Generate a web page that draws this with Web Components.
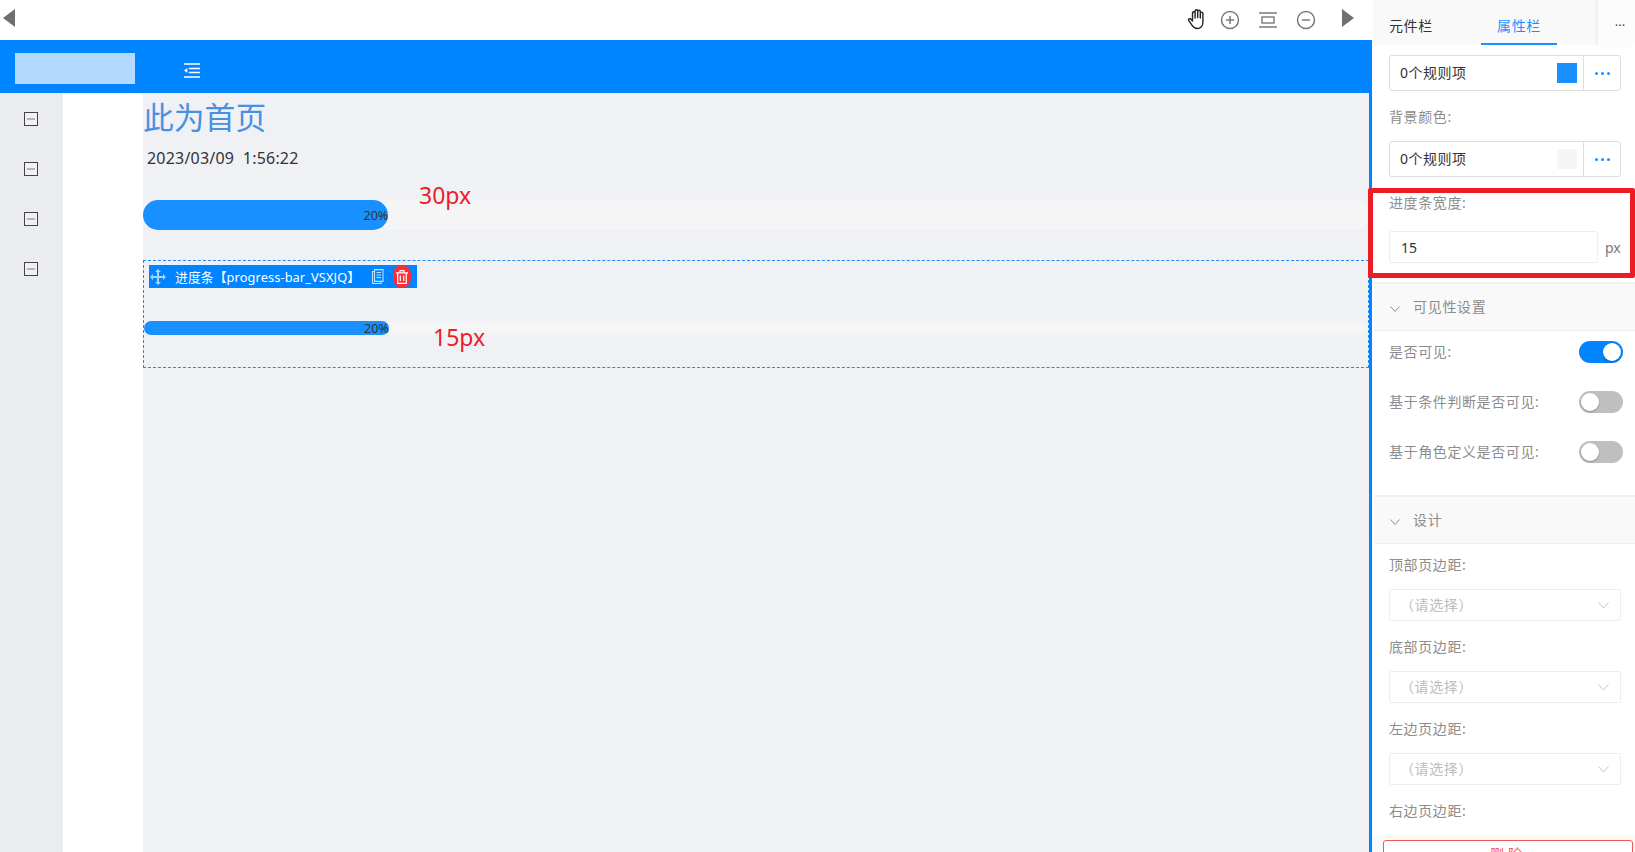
<!DOCTYPE html>
<html lang="zh">
<head>
<meta charset="utf-8">
<title>页面设计器</title>
<style>
  html, body { margin: 0; height: 100%; overflow: hidden; background: #fff; }
  body { font-family: "Noto Sans", "Noto Sans CJK SC", sans-serif; font-size: 14px; color: #333; }
</style>
</head>
<body>
<ds-designer>
  <ds-toolbar slot="toolbar"></ds-toolbar>
  <ds-header slot="header"></ds-header>
  <ds-rail slot="rail" count="4"></ds-rail>
  <ds-canvas slot="canvas">
    <ds-progress height="30" value="20" note="30px"></ds-progress>
    <ds-progress height="15" value="20" note="15px" selected name="进度条【progress-bar_VSXJQ】"></ds-progress>
  </ds-canvas>
  <ds-panel slot="panel">
    <ds-rule-field swatch="#1890ff" style="margin-top:10px"></ds-rule-field>
    <ds-label>背景颜色:</ds-label>
    <ds-rule-field swatch="#f5f5f5"></ds-rule-field>
    <ds-width-field label="进度条宽度:" value="15"></ds-width-field>
    <ds-section title="可见性设置">
      <ds-toggle on>是否可见:</ds-toggle>
      <ds-toggle>基于条件判断是否可见:</ds-toggle>
      <ds-toggle>基于角色定义是否可见:</ds-toggle>
    </ds-section>
    <ds-section title="设计" tight>
      <ds-label>顶部页边距:</ds-label>
      <ds-select></ds-select>
      <ds-label>底部页边距:</ds-label>
      <ds-select></ds-select>
      <ds-label>左边页边距:</ds-label>
      <ds-select></ds-select>
      <ds-label>右边页边距:</ds-label>
    </ds-section>
  </ds-panel>
</ds-designer>

<script>
(() => {
  "use strict";

  const FONT = `"Noto Sans", "Noto Sans CJK SC", sans-serif`;
  const BLUE = "#0084ff";

  // small helper, every element is just styles + markup in an open root
  const define = (tag, css, html, init) => {
    customElements.define(tag, class extends HTMLElement {
      constructor() {
        super();
        const root = this.attachShadow({ mode: "open" });
        root.innerHTML = `<style>${css}</style>${typeof html === "function" ? html(this) : html}`;
        if (init) init(this, root);
      }
    });
  };

  define("ds-designer", `
    :host{ display:grid; grid-template-columns:1372px 263px; position:relative; width:1635px; height:852px; overflow:hidden; font-family:${FONT}; }
    .main{ display:flex; flex-direction:column; min-width:0; height:852px; }
    .body{ flex:1; display:flex; min-height:0; border-right:3px solid ${BLUE}; }
    .white{ width:80px; background:#fff; flex:none; }
    /* red annotation drawn over the screenshot, sits across the panel edge */
    .hot{ position:absolute; left:1368px; top:188px; width:267px; height:90px; box-sizing:border-box; border:5px solid #ee1c25; border-radius:2px; pointer-events:none; }
  `, `
    <div class="main">
      <slot name="toolbar"></slot>
      <slot name="header"></slot>
      <div class="body">
        <slot name="rail"></slot>
        <div class="white"></div>
        <slot name="canvas"></slot>
      </div>
    </div>
    <slot name="panel"></slot>
    <div class="hot"></div>
  `);

  define("ds-toolbar", `
    :host{ display:flex; align-items:center; height:40px; background:#fff; padding:0 18px 0 3px; box-sizing:border-box; }
    svg{ display:block; flex:none; }
    .grow{ flex:1; }
    .tools{ display:flex; align-items:center; }
  `, `
    <svg width="12" height="18" viewBox="0 0 12 18" style="margin-top:-4px"><path d="M12 0v18L0 9z" fill="#6f6f6f"/></svg>
    <div class="grow"></div>
    <div class="tools">
      <svg width="20" height="22" viewBox="0 0 20 22" fill="none" stroke="#222" stroke-width="1.4" stroke-linecap="round" stroke-linejoin="round" style="margin-top:-2px">
        <path d="M5.5 12.5V5a1.3 1.3 0 0 1 2.6 0v5M8.1 9.5V3a1.3 1.3 0 0 1 2.6 0v6.5M10.7 9.5V3.6a1.3 1.3 0 0 1 2.6 0v6M13.3 10V5.4a1.3 1.3 0 0 1 2.6 0V14c0 4-2.4 6.5-5.7 6.5-3 0-4.4-1.6-5.6-3.8L1.7 12.4c-.7-1.3 1-2.4 2-1.4l1.8 2"/>
      </svg>
      <svg width="20" height="20" viewBox="0 0 20 20" fill="none" stroke="#7a7a7a" stroke-width="1.5" style="margin-left:13px"><circle cx="10" cy="10" r="8.5"/><path d="M10 6v8M6 10h8"/></svg>
      <svg width="20" height="16" viewBox="0 0 20 16" fill="none" stroke="#7a7a7a" stroke-width="1.4" style="margin-left:18px"><path d="M1 1h18M1 15h18"/><rect x="4" y="5" width="12" height="6"/></svg>
      <svg width="20" height="20" viewBox="0 0 20 20" fill="none" stroke="#7a7a7a" stroke-width="1.5" style="margin-left:18px"><circle cx="10" cy="10" r="8.5"/><path d="M6 10h8"/></svg>
      <svg width="12" height="18" viewBox="0 0 12 18" style="margin-left:26px;margin-top:-4px"><path d="M0 0v18l12-9z" fill="#707070"/></svg>
    </div>
  `);

  define("ds-header", `
    :host{ display:flex; align-items:center; height:53px; background:${BLUE}; padding:4px 0 0 15px; box-sizing:border-box; flex:none; }
    .logo{ width:120px; height:31px; background:#b3d9ff; }
    svg{ display:block; margin:4px 0 0 49px; }
  `, `
    <div class="logo"></div>
    <svg width="16" height="15" viewBox="0 0 16 15" fill="none" stroke="#fff" stroke-width="1.3">
      <path d="M0 1h16M5 5.5h11M5 9.5h11M0 14h16"/><path d="M3.4 5v5L0 7.5z" fill="#fff" stroke="none"/>
    </svg>
  `);

  define("ds-rail", `
    :host{ display:flex; flex-direction:column; align-items:center; gap:36px; width:63px; padding:19px 1px 0 0; background:#ebecf0; box-sizing:border-box; flex:none; }
    i{ display:flex; align-items:center; justify-content:center; width:14px; height:14px; box-sizing:border-box; border:1px solid #444; background:#f0f1f4; }
    i::after{ content:""; width:8px; height:2px; background:#b5b5b5; }
  `, el => "<i></i>".repeat(+el.getAttribute("count")));

  define("ds-canvas", `
    :host{ display:block; flex:1; min-width:0; background:#f0f1f5; }
    h1{ margin:0; padding-top:5px; font:400 30.8px/38px ${FONT}; color:#4a90e2; height:38px; }
    .date{ margin:0; padding:11px 0 0 4px; font:400 16px/22px ${FONT}; color:#333; height:22px; white-space:pre; letter-spacing:.2px; }
    .list{ padding-top:31px; display:flex; flex-direction:column; gap:30px; }
  `, `
    <h1>此为首页</h1>
    <p class="date">2023/03/09  1:56:22</p>
    <div class="list"><slot></slot></div>
  `);

  define("ds-progress", `
    :host{ display:block; position:relative; box-sizing:border-box; }
    :host([selected]){ border:1px dashed #1a8cff; height:108px; padding:4px 0 0 5px; }
    .bar{ display:flex; align-items:center; width:268px; height:23px; background:${BLUE}; color:#fff; font:400 12.8px/24px ${FONT}; white-space:nowrap; }
    .bar svg{ display:block; flex:none; }
    .name{ margin-left:9px; width:196px; letter-spacing:.1px; }
    .del{ display:flex; align-items:center; justify-content:center; flex:none; width:18px; height:23px; margin-left:8px; background:#fb2d37; border-radius:9px; }
    .rail{ height:var(--h); background:#f5f5f5; border-radius:calc(var(--h) / 2); }
    .fill{ box-sizing:border-box; height:100%; background:#1890ff; border-radius:inherit; font:400 12.5px/calc(var(--h) + 2px) ${FONT}; color:#333; text-align:right; overflow:visible; white-space:nowrap; }
    :host([selected]) .rail{ margin:33px 0 0 -5px; }
    .note{ position:absolute; color:#ee1c25; font:400 23px/32px ${FONT}; white-space:nowrap; }
  `, el => {
    const h = +el.getAttribute("height");
    const val = el.getAttribute("value");
    const name = el.getAttribute("name");
    const bar = name ? `
      <div class="bar">
        <svg width="16" height="16" viewBox="0 0 16 16" fill="#a6d4ff" style="margin-left:1px"><path d="M8 0l3 3H9v4h4V5l3 3-3 3V9H9v4h2l-3 3-3-3h2V9H3v2L0 8l3-3v2h4V3H5z"/></svg>
        <span class="name">${name}</span>
        <svg width="14" height="15" viewBox="0 0 14 15" fill="none" stroke="#bfe0ff" stroke-width="1.1"><path d="M3.5.6h8.5v11.8H3.5zM5.5 3.5h4.5M5.5 6h4.5M5.5 8.5h4.5"/><path d="M3.5 2.5H1.5v12h8.500v-2"/></svg>
        <span class="del"><svg width="12" height="14" viewBox="0 0 12 14" fill="none" stroke="#fff" stroke-width="1.2"><path d="M0 2.800h12M4 2.500V.7h4v1.800M1.700 3v10.300h8.600V3M4.300 5.500v5.500M7.700 5.500v5.500"/></svg></span>
      </div>` : "";
    const pos = name ? "left:289px;top:60px" : "left:276px;top:-21px";
    return `${bar}
      <div class="rail" style="--h:${h === 15 ? 14 : h}px"><div class="fill" style="width:${val}%">${val}%</div></div>
      <span class="note" style="${pos}">${el.getAttribute("note")}</span>`;
  });

  define("ds-panel", `
    :host{ display:flex; flex-direction:column; height:852px; position:relative; background:#fff; overflow:hidden; }
    .tabs{ display:flex; height:45px; flex:none; background:#f9f9f9; margin-left:1px; }
    .tab{ text-align:center; font-size:14px; letter-spacing:.6px; line-height:52px; color:#333; box-sizing:border-box; height:45px; }
    .tab.first{ width:108px; padding-left:16px; text-align:left; }
    .tab.on{ width:76px; color:#1890ff; border-bottom:2px solid #1890ff; }
    .more{ margin-left:auto; width:37px; padding-left:7px; box-sizing:border-box; background:#fcfcfc; color:#444; font-size:13px; line-height:50px; text-align:center; box-shadow:-2px 0 3px rgba(0,0,0,.05); }
    .scroll{ flex:1; min-height:0; overflow:hidden; }
    .foot{ flex:none; height:17px; background:#fafafa; padding:5px 2px 0 11px; box-sizing:border-box; }
    .del{ height:40px; border:1px solid #f25757; border-radius:3px; background:#fff; color:#f25757; font-size:14px; line-height:26px; text-align:center; letter-spacing:4px; }
  `, `
    <div class="tabs">
      <div class="tab first">元件栏</div>
      <div class="tab on">属性栏</div>
      <div class="more">···</div>
    </div>
    <div class="scroll"><slot></slot></div>
    <div class="foot"><div class="del">删除</div></div>
  `);

  define("ds-label", `
    :host{ display:block; padding-left:17px; color:#8c8c8c; font-size:14px; letter-spacing:.6px; line-height:52px; height:50px; }
  `, `<slot></slot>`);

  define("ds-rule-field", `
    :host{ display:flex; margin:0 14px 0 17px; height:36px; box-sizing:border-box; border:1px solid #ddd; border-radius:3px; background:#fff; }
    .val{ flex:1; display:flex; align-items:center; padding:0 6px 0 10px; font-size:14px; letter-spacing:.5px; color:#333; }
    .val span{ flex:1; padding-bottom:2px; }
    .val i{ width:20px; height:20px; background:var(--sw); }
    .dots{ width:36px; border-left:1px solid #ddd; display:flex; align-items:center; justify-content:center; gap:3px; }
    .dots b{ width:3px; height:3px; border-radius:50%; background:#1890ff; }
  `, el => `
    <div class="val" style="--sw:${el.getAttribute("swatch")}"><span>0个规则项</span><i></i></div>
    <div class="dots"><b></b><b></b><b></b></div>
  `);

  define("ds-width-field", `
    :host{ display:block; padding-left:17px; height:105px; box-sizing:border-box; }
    .lab{ color:#8c8c8c; line-height:52px; height:54px; font-size:14px; letter-spacing:.6px; }
    .row{ display:flex; align-items:center; }
    .inp{ width:209px; height:32px; box-sizing:border-box; border:1px solid #eee; border-radius:2px; padding-left:11px; font-size:14px; line-height:31px; color:#333; }
    .unit{ margin-left:7px; font-size:14px; color:#777; }
  `, el => `
    <div class="lab">${el.getAttribute("label")}</div>
    <div class="row"><div class="inp">${el.getAttribute("value")}</div><span class="unit">px</span></div>
  `);

  define("ds-section", `
    :host{ display:block; margin-left:2px; }
    .head{ display:flex; align-items:center; height:46px; background:#f9f9f9; border-top:2px solid #f0f0f0; border-bottom:1px solid #eee; color:#8c8c8c; font-size:14px; letter-spacing:.7px; box-sizing:content-box; }
    .head span{ margin-top:-2px; }
    .head svg{ margin:4px 13px 0 16px; display:block; }
    .body{ margin-left:-2px; padding:0 0 14px; }
    :host([tight]) .body{ padding-bottom:0; margin-top:-5px; }
  `, el => `
    <div class="head">
      <svg width="10" height="6" viewBox="0 0 10 6" fill="none" stroke="#8c8c8c" stroke-width="1"><path d="M.5.500L5 5.500 9.500.5"/></svg>
      <span>${el.getAttribute("title")}</span>
    </div>
    <div class="body"><slot></slot></div>
  `);

  define("ds-toggle", `
    :host{ display:flex; align-items:center; justify-content:space-between; height:50px; box-sizing:border-box; padding:0 12px 8px 17px; color:#8c8c8c; font-size:14px; letter-spacing:.6px; }
    span{ padding-bottom:2px; }
    .sw{ position:relative; width:44px; height:22px; border-radius:11px; background:#bfbfbf; flex:none; }
    .sw::after{ content:""; position:absolute; top:2px; left:2px; width:18px; height:18px; border-radius:50%; background:#fff; box-shadow:0 1px 2px rgba(0,0,0,.25); }
    :host([on]) .sw{ background:${BLUE}; }
    :host([on]) .sw::after{ left:24px; }
  `, `<span><slot></slot></span><div class="sw"></div>`);

  define("ds-select", `
    :host{ display:flex; align-items:center; justify-content:space-between; margin:0 14px 0 17px; height:32px; box-sizing:border-box; border:1px solid #eee; border-radius:2px; padding:0 11px 0 10px; color:#bdbdbd; font-size:14px; letter-spacing:.6px; }
    span{ padding-bottom:2px; }
    svg{ display:block; }
  `, `<span>（请选择）</span>
    <svg width="11" height="7" viewBox="0 0 11 7" fill="none" stroke="#c4c4c4" stroke-width="1"><path d="M.5.500l5 5.500 5-5.500"/></svg>`);
})();
</script>
</body>
</html>
